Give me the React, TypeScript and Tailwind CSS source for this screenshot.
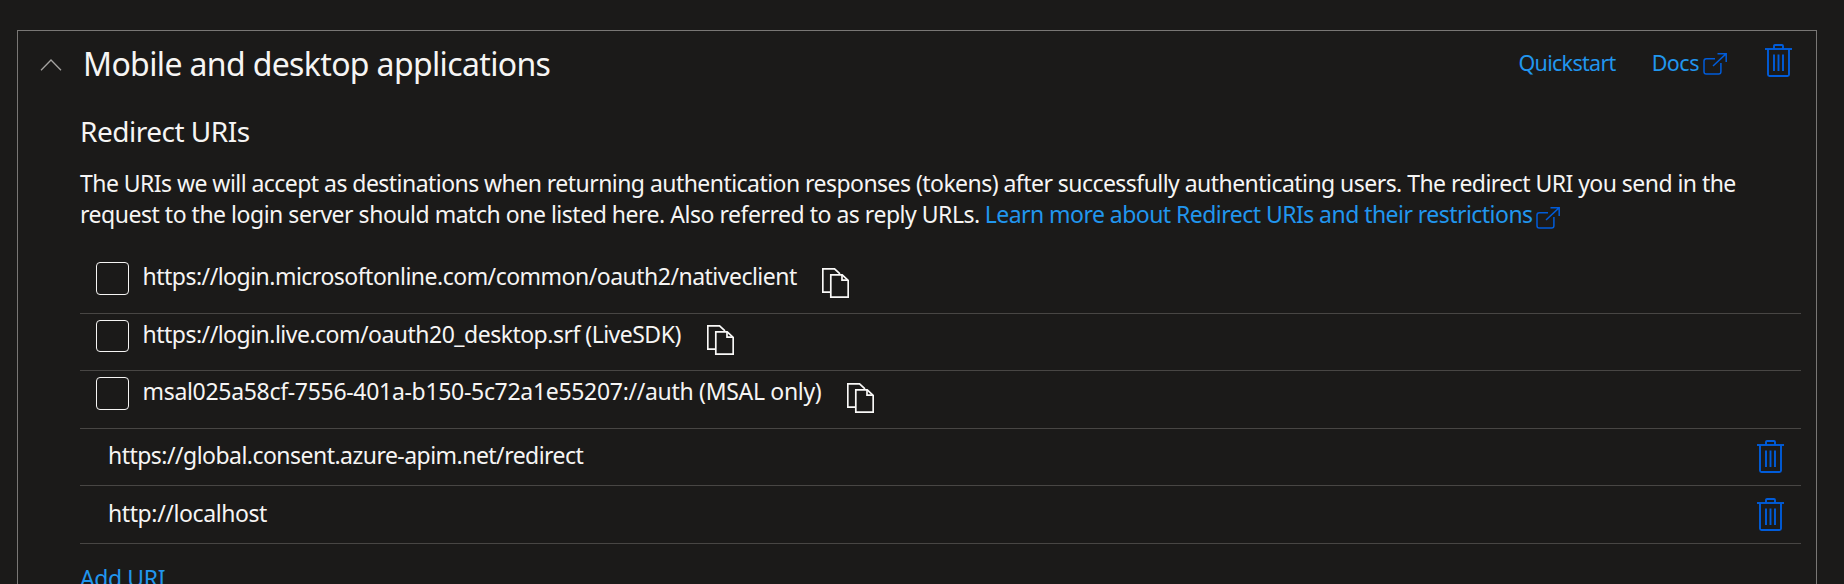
function ChevronUp() {
  return (
    <svg className="h-3 w-[22px] shrink-0" viewBox="0 0 22 12" fill="none" stroke="#a5a3a1" strokeWidth="1.3">
      <path d="M1 11.3 11 1l10 10.3" />
    </svg>
  );
}

function ExternalLink({ className }: { className: string }) {
  return (
    <svg className={`h-6 w-6 ${className}`} viewBox="0 0 24 24" fill="none" stroke="#015cda" strokeWidth="1.5">
      <path d="M12 6.8H3.3a2.3 2.3 0 0 0-2.3 2.3v10.6A2.3 2.3 0 0 0 3.3 22h12.3a2.3 2.3 0 0 0 2.3-2.3V11" />
      <path d="M10 14 23 1.9M14.5 1.7h8.7v8.3" />
    </svg>
  );
}

function Trash({ className }: { className: string }) {
  return (
    <svg className={`h-[33px] w-[27px] shrink-0 ${className}`} viewBox="0 0 27 33" fill="none" stroke="#015cda" strokeWidth="1.9">
      <path d="M0 5h27" />
      <path d="M9 5V2a1 1 0 0 1 1-1h7a1 1 0 0 1 1 1v3" />
      <path d="M3 5v25.5A1.5 1.5 0 0 0 4.500 32h18a1.500 1.500 0 0 0 1.500-1.500V5" />
      <path d="M9 10.500v16.500M13.500 10.500v16.500M18 10.500v16.500" />
    </svg>
  );
}

function Copy() {
  return (
    <svg className="h-[30px] w-[27px] shrink-0" viewBox="0 0 27 30" fill="none" stroke="#faf9f8" strokeWidth="1.7">
      <path d="M8.300 24.200H.8V.8h11.700L18 5.800" />
      <path d="M8.800 6.800h11.400l6 5.700v16.700H8.800z" />
      <path d="M20 6.800v5.400h6" />
    </svg>
  );
}

const presets = [
  { uri: "https://login.microsoftonline.com/common/oauth2/nativeclient", row: "h-[58px]", box: "h-[33px]", text: "tracking-[-0.51px]", copy: "ml-[25px] mt-3" },
  { uri: "https://login.live.com/oauth20_desktop.srf (LiveSDK)", row: "h-[57px]", box: "h-8", text: "tracking-[-0.51px]", copy: "ml-[26px] mt-[11px]" },
  { uri: "msal025a58cf-7556-401a-b150-5c72a1e55207://auth (MSAL only)", row: "h-[58px]", box: "h-[33px]", text: "tracking-[-0.31px]", copy: "ml-[26px] mt-3" },
];

const custom = [
  { uri: "https://global.consent.azure-apim.net/redirect", row: "h-[57px]", text: "leading-[53px] tracking-[-0.53px]", icon: "mt-[11px]" },
  { uri: "http://localhost", row: "h-[58px]", text: "leading-[54px] tracking-[-0.4px]", icon: "mt-3" },
];

export default function App() {
  return (
    <div className="h-screen overflow-hidden bg-[#1b1a19] pt-[30px] pr-[27px] pl-[17px] font-['Noto_Sans','Open_Sans',sans-serif] text-[23px] text-[#f6f5f4]">
      <section className="h-[640px] border border-[#797775] pr-[15px]">
        <header className="flex h-[63px] items-center pr-[9px] pl-[22px]">
          <div className="mt-1 flex">
            <ChevronUp />
          </div>
          <h1 className="mt-0.5 ml-[21px] text-[32px] leading-[63px] tracking-[-0.64px] whitespace-nowrap">Mobile and desktop applications</h1>
          <nav className="ml-auto flex items-center text-[21.5px] text-[#2196ee]">
            <a className="mt-0.5 tracking-[-0.7px]">Quickstart</a>
            <a className="mt-0.5 ml-[36px] flex items-center tracking-[-0.5px]">
              Docs
              <ExternalLink className="mt-px ml-[4px]" />
            </a>
            <Trash className="mb-1 ml-[38px]" />
          </nav>
        </header>

        <div className="ml-[62px]">
          <h2 className="mt-[17px] text-[28px] leading-10 tracking-[-0.5px]">Redirect URIs</h2>
          <div className="mt-[17px] leading-[31px] whitespace-nowrap">
            <p className="tracking-[-0.545px]">
              The URIs we will accept as destinations when returning authentication responses (tokens) after successfully authenticating users. The redirect URI you send in the
            </p>
            <p className="flex">
              <span className="tracking-[-0.48px]">request to the login server should match one listed here. Also referred to as reply URLs.</span>
              <a className="ml-[5px] flex tracking-[-0.54px] text-[#2196ee]">
                Learn more about Redirect URIs and their restrictions
                <ExternalLink className="mt-[7px] ml-[3px]" />
              </a>
            </p>
          </div>

          <ul className="mt-[26px]">
            {presets.map((p) => (
              <li key={p.uri} className={`flex items-start border-b border-[#484644] pl-4 ${p.row}`}>
                <span className={`mt-1.5 w-[33px] shrink-0 rounded-[4px] border border-[#f6f5f4] ${p.box}`} />
                <span className={`ml-[13.5px] leading-10 whitespace-nowrap ${p.text}`}>{p.uri}</span>
                <span className={`flex ${p.copy}`}>
                  <Copy />
                </span>
              </li>
            ))}
            {custom.map((c) => (
              <li key={c.uri} className={`flex items-start justify-between border-b border-[#484644] pr-[17px] pl-7 ${c.row}`}>
                <span className={`whitespace-nowrap ${c.text}`}>{c.uri}</span>
                <Trash className={c.icon} />
              </li>
            ))}
          </ul>
          <a className="mt-[19px] block leading-[31px] tracking-[-0.4px] text-[#2196ee]">Add URI</a>
        </div>
      </section>
    </div>
  );
}
